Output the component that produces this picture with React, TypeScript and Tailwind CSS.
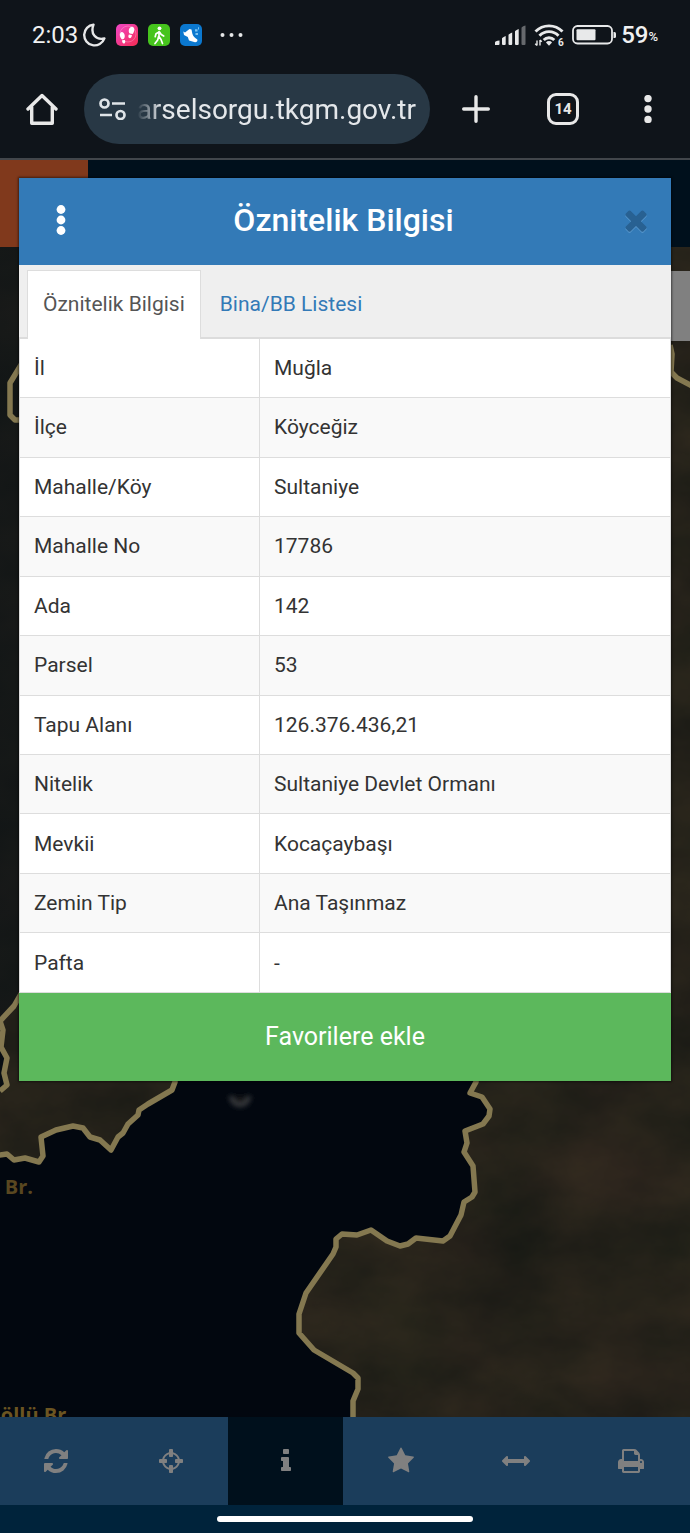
import React from "react";

const ICONS = {
  refresh:
    "M1639 1056q0 5-1 7-64 268-268 434.5t-478 166.5q-146 0-282.5-55t-243.5-157l-129 129q-19 19-45 19t-45-19-19-45v-448q0-26 19-45t45-19h448q26 0 45 19t19 45-19 45l-137 137q71 66 161 102t187 36q134 0 250-65t186-179q11-17 53-117 8-23 30-23h192q13 0 22.5 9.5t9.5 22.5zm25-800v448q0 26-19 45t-45 19h-448q-26 0-45-19t-19-45 19-45l138-138q-148-137-349-137-134 0-250 65t-186 179q-11 17-53 117-8 23-30 23h-199q-13 0-22.5-9.5t-9.5-22.5v-7q65-268 270-434.5t480-166.5q146 0 284 55.5t245 156.5l130-129q19-19 45-19t45 19 19 45z",
  crosshairs:
    "M1325 1024h-109q-26 0-45-19t-19-45v-128q0-26 19-45t45-19h109q-32-108-112.5-188.5t-188.5-112.5v109q0 26-19 45t-45 19h-128q-26 0-45-19t-19-45v-109q-108 32-188.5 112.5t-112.5 188.5h109q26 0 45 19t19 45v128q0 26-19 45t-45 19h-109q32 108 112.5 188.5t188.5 112.5v-109q0-26 19-45t45-19h128q26 0 45 19t19 45v109q108-32 188.5-112.5t112.5-188.5zm339-192v128q0 26-19 45t-45 19h-143q-37 161-154.5 278.5t-278.5 154.5v143q0 26-19 45t-45 19h-128q-26 0-45-19t-19-45v-143q-161-37-278.5-154.5t-154.5-278.5h-143q-26 0-45-19t-19-45v-128q0-26 19-45t45-19h143q37-161 154.5-278.5t278.5-154.5v-143q0-26 19-45t45-19h128q26 0 45 19t19 45v143q161 37 278.5 154.5t154.5 278.5h143q26 0 45 19t19 45z",
  info: "M1216 1344v128q0 26-19 45t-45 19h-512q-26 0-45-19t-19-45v-128q0-26 19-45t45-19h64v-384h-64q-26 0-45-19t-19-45v-128q0-26 19-45t45-19h384q26 0 45 19t19 45v576h64q26 0 45 19t19 45zm-128-1152v192q0 26-19 45t-45 19h-256q-26 0-45-19t-19-45v-192q0-26 19-45t45-19h256q26 0 45 19t19 45z",
  star: "M1728 647q0 22-26 48l-363 354 86 500q1 7 1 20 0 21-10.5 35.5t-30.5 14.5q-19 0-40-12l-449-236-449 236q-22 12-40 12-21 0-31.5-14.5t-10.5-35.5q0-6 2-20l86-500-364-354q-25-27-25-48 0-37 56-46l502-73 225-455q19-41 49-41t49 41l225 455 502 73q56 9 56 46z",
  arrows:
    "M1792 896q0 26-19 45l-256 256q-19 19-45 19t-45-19-19-45v-128h-1024v128q0 26-19 45t-45 19-45-19l-256-256q-19-19-19-45t19-45l256-256q19-19 45-19t45 19 19 45v128h1024v-128q0-26 19-45t45-19 45 19l256 256q19 19 19 45z",
  print:
    "M448 1536h896v-256h-896v256zm0-640h896v-384h-160q-40 0-68-28t-28-68v-160h-640v640zm1152 64q0-26-19-45t-45-19-45 19-19 45 19 45 45 19 45-19 19-45zm128 0v416q0 13-9.5 22.5t-22.5 9.5h-224v160q0 40-28 68t-68 28h-960q-40 0-68-28t-28-68v-160h-224q-13 0-22.5-9.5t-9.5-22.5v-416q0-79 56.5-135.5t135.5-56.5h64v-544q0-40 28-68t68-28h672q40 0 88 20t76 48l152 152q28 28 48 76t20 88v256h64q79 0 135.5 56.5t56.5 135.5z",
  times:
    "M1490 1322q0 40-28 68l-136 136q-28 28-68 28t-68-28l-294-294-294 294q-28 28-68 28t-68-28l-136-136q-28-28-28-68t28-68l294-294-294-294q-28-28-28-68t28-68l136-136q28-28 68-28t68 28l294 294 294-294q28-28 68-28t68 28l136 136q28 28 28 68t-28 68l-294 294 294 294q28 28 28 68z",
};

function Glyph({ name, className }: { name: keyof typeof ICONS; className?: string }) {
  return (
    <svg viewBox="0 0 1792 1792" fill="currentColor" className={className} aria-hidden="true">
      <path d={ICONS[name]} />
    </svg>
  );
}

const ROWS: [string, string][] = [
  ["İl", "Muğla"],
  ["İlçe", "Köyceğiz"],
  ["Mahalle/Köy", "Sultaniye"],
  ["Mahalle No", "17786"],
  ["Ada", "142"],
  ["Parsel", "53"],
  ["Tapu Alanı", "126.376.436,21"],
  ["Nitelik", "Sultaniye Devlet Ormanı"],
  ["Mevkii", "Kocaçaybaşı"],
  ["Zemin Tip", "Ana Taşınmaz"],
  ["Pafta", "-"],
];

const TOOLS: { name: keyof typeof ICONS; label: string; active?: boolean }[] = [
  { name: "refresh", label: "Yenile" },
  { name: "crosshairs", label: "Konum" },
  { name: "info", label: "Bilgi", active: true },
  { name: "star", label: "Favoriler" },
  { name: "arrows", label: "Ölçüm" },
  { name: "print", label: "Yazdır" },
];

function StatusBar() {
  return (
    <div className="flex h-[70px] items-center justify-between px-8 text-[#f0f1f2]">
      <div className="flex items-center">
        <span className="text-[24px] leading-7">2:03</span>
        <svg viewBox="0 0 24 24" className="ml-1 size-6" fill="none" stroke="#e6e7e8" strokeWidth="2.4" strokeLinejoin="round" aria-hidden="true">
          <path d="M11.5 1.6A10.4 10.4 0 1 0 22.4 15.4C14 17.500 8 11 11.500 1.600Z" />
        </svg>
        <svg viewBox="0 0 22 22" className="ml-[10px] size-[22px]" aria-hidden="true">
          <defs>
            <linearGradient id="pink" x1="0" y1="0" x2="1" y2="1">
              <stop offset="0" stopColor="#f047c8" />
              <stop offset="1" stopColor="#f52c52" />
            </linearGradient>
          </defs>
          <rect width="22" height="22" rx="5" fill="url(#pink)" />
          <circle cx="12" cy="10" r="8" fill="none" stroke="#fff" strokeOpacity=".25" />
          <g fill="#fff">
            <path d="M4.300 9C5.600 6.800 8.300 8.500 8.700 11.200C8.900 13 8.500 14.200 7.700 15L5.700 15.200C4 13 3.200 11 4.300 9Z" />
            <path d="M6.100 16.300L8.900 16C9.600 17.500 9.200 19.400 8 19.600C6.700 19.800 6 18 6.100 16.300Z" />
            <path d="M13 5.200C13.600 3.200 15.800 2 17.300 3.200C18.900 4.600 18.400 8 16.600 9.900L13.700 9.500C12.700 8.400 12.500 6.700 13 5.200Z" />
            <path d="M12.900 10.500L15.900 11C15.900 12.900 14.800 14.500 13.300 14.100C12 13.800 12.200 11.800 12.900 10.500Z" />
          </g>
        </svg>
        <svg viewBox="0 0 22 22" className="ml-[10px] size-[22px]" aria-hidden="true">
          <rect width="22" height="22" rx="5" fill="#46c41d" />
          <circle cx="11.500" cy="4.300" r="1.900" fill="#fff" />
          <path d="M11 7.500V12.500L13 15.500L14.500 19.500M10.600 12.500L9.700 16L7 19.500M11 8L8 9.700L7.200 12.700M11.500 8L13.200 10.500L15.700 12" fill="none" stroke="#fff" strokeWidth="1.700" strokeLinecap="round" strokeLinejoin="round" />
        </svg>
        <svg viewBox="0 0 22 22" className="ml-[10px] size-[22px]" aria-hidden="true">
          <rect width="22" height="22" rx="5" fill="#0b78cf" />
          <path d="M3.300 7.500L5 8.600L9.500 5L11.500 5.600L12.300 9.500C13 12.500 15 14 17.300 15.500C18 17 16.500 18.300 15 18.200L9 16.500L7.800 13L4 11Z" fill="#fff" />
          <path d="M15 6.300h2.500M15.500 10h2.500M18 4.300h1" stroke="#7cc3f2" strokeWidth="2.200" />
        </svg>
        <svg viewBox="0 0 24 4" className="ml-[18px] h-1 w-6" fill="#e6e7e8" aria-hidden="true">
          <circle cx="2.500" cy="2" r="2" />
          <circle cx="11.500" cy="2" r="2" />
          <circle cx="20.500" cy="2" r="2" />
        </svg>
      </div>
      <div className="flex items-center">
        <svg viewBox="0 0 31 20" className="h-5 w-[31px]" fill="#e8e9ea" aria-hidden="true">
          <path d="M0 20v-2.500q0-1.500 4.500-2v3.500q0 1-1 1zM7 13.500q0-1 3.700-2.500v8q0 1-1 1h-1.700q-1 0-1-1zM13.500 10q0-1 3.700-2.500v11.500q0 1-1 1h-1.700q-1 0-1-1zM20 6.500q0-1 3.700-2.500v15q0 1-1 1h-1.700q-1 0-1-1z" />
          <path d="M26.500 3q0-1.500 4-2.500v18.500q0 1-1 1h-2q-1 0-1-1z" opacity=".4" />
        </svg>
        <svg viewBox="0 0 30 24" className="ml-2 h-6 w-[30px]" aria-hidden="true">
          <g fill="none" stroke="#e8e9ea" strokeWidth="2.900">
            <path d="M1.500 8.500A19 19 0 0 1 28.500 8.500" />
            <path d="M5.500 12.800A13 13 0 0 1 24.500 12.800" />
            <path d="M9.700 17A7.500 7.500 0 0 1 20.300 17" />
          </g>
          <path d="M12 19.500a3.500 3 0 0 1 6 0l-3 3.300z" fill="#e8e9ea" />
          <path d="M3 22.500v-5M3 22.500l-1.800-1.800M6 17v5.500M6 17l1.800 1.800" stroke="#e8e9ea" strokeWidth="1.400" fill="none" />
          <text x="24" y="23" fontSize="10" fontWeight="700" fill="#e8e9ea" fontFamily="Roboto, sans-serif">6</text>
        </svg>
        <svg viewBox="0 0 44 20" className="ml-2 h-5 w-11" aria-hidden="true">
          <rect x="1" y="1" width="39" height="17.500" rx="4.500" fill="none" stroke="#e8e9ea" strokeWidth="1.800" />
          <rect x="4.500" y="4.300" width="19" height="11" rx="1" fill="#e8e9ea" />
          <path d="M41.500 7h1q1.500 0 1.500 1.500v3q0 1.500-1.500 1.500h-1z" fill="#e8e9ea" />
        </svg>
        <span className="ml-[5px] text-[24px] font-medium leading-7">59</span>
        <span className="self-end text-[13px] font-medium leading-6">%</span>
      </div>
    </div>
  );
}

function BrowserBar() {
  return (
    <div className="flex h-[90px] items-start border-b-2 border-[#42464b] pt-1">
      <div className="flex w-full items-center pl-[26px] pr-[38px]">
        <button aria-label="Ana sayfa" className="flex size-8 shrink-0 items-center justify-center">
          <svg viewBox="0 0 32 32" className="size-8" fill="none" stroke="#e8e8e8" strokeWidth="3.400" strokeLinejoin="round" strokeLinecap="round" aria-hidden="true">
            <path d="M2 16L16 2.500L30 16M5.700 14V30.200H26.300V14" />
          </svg>
        </button>
        <div className="ml-[26px] flex h-[70px] min-w-0 flex-1 items-center overflow-hidden rounded-full bg-[#283845] pl-[15px] pr-[14px]">
          <svg viewBox="0 0 27 22" className="h-[22px] w-[27px] shrink-0" fill="none" stroke="#dfe4e8" strokeWidth="2.700" aria-hidden="true">
            <circle cx="5.500" cy="5.500" r="4" />
            <path d="M13 5.500H26M1 17H13" />
            <circle cx="21.500" cy="17" r="4" />
          </svg>
          <div className="ml-2 flex min-w-0 flex-1 justify-end whitespace-nowrap pt-[2px] text-[28px] leading-9 text-[#e4e7ea]">
            <span className="[mask-image:linear-gradient(to_right,transparent,black_24px)]">arselsorgu.tkgm.gov.tr</span>
          </div>
        </div>
        <button aria-label="Yeni sekme" className="ml-8 shrink-0">
          <svg viewBox="0 0 28 28" className="size-7" stroke="#e8e8e8" strokeWidth="3.400" strokeLinecap="round" aria-hidden="true">
            <path d="M14 1.700V26.300M1.700 14H26.300" />
          </svg>
        </button>
        <button aria-label="Sekmeler" className="ml-[57px] flex size-8 shrink-0 items-center justify-center rounded-[9px] border-[3px] border-[#e8e8e8] text-[15px] font-bold leading-none text-[#e8e8e8]">
          14
        </button>
        <button aria-label="Menü" className="ml-[65px] shrink-0">
          <svg viewBox="0 0 8 28" className="h-7 w-2" fill="#e8e8e8" aria-hidden="true">
            <circle cx="4" cy="3.600" r="3.700" />
            <circle cx="4" cy="14" r="3.700" />
            <circle cx="4" cy="24.400" r="3.700" />
          </svg>
        </button>
      </div>
    </div>
  );
}

const LAKE =
  "M175 1000L175 1082L172 1090L148 1104L139 1110L138 1115L128 1124L123 1133L118 1137L111 1150L100 1140L90 1137L83 1128L73 1126L56 1130L41 1137L43 1156L39 1162L25 1158L14 1160L7 1154L-6 1156V1440H353V1401L358 1389V1378L353 1373L314 1350L299 1333V1314L306 1293L333 1254L336 1247V1239L342 1234L357 1235L371 1230L387 1241L400 1246L408 1244L416 1238L443 1241L450 1236L461 1215L464 1202L472 1197L475 1192L473 1166L464 1152L467 1143L465 1131L483 1124L489 1116L490 1109L482 1097L470 1093L476 1082V1000Z";

function SatelliteMap() {
  return (
    <svg viewBox="0 160 690 1257" preserveAspectRatio="xMidYMid slice" className="absolute inset-0 size-full" aria-hidden="true">
      <defs>
        <filter id="terrain" x="0" y="0" width="100%" height="100%" colorInterpolationFilters="sRGB">
          <feTurbulence type="fractalNoise" baseFrequency="0.009 0.014" numOctaves="5" seed="8" />
          <feColorMatrix values="0.12 0 0 0 0.085  0.08 0.02 0 0 0.082  0.05 0 0 0 0.075  0 0 0 0 1" />
        </filter>
        <filter id="soft" x="-100%" y="-100%" width="300%" height="300%">
          <feGaussianBlur stdDeviation="2.500" />
        </filter>
        <linearGradient id="dusk" x1="0" y1="0" x2="1" y2="0">
          <stop offset="0" stopColor="#0c1216" stopOpacity=".65" />
          <stop offset="1" stopColor="#0c1216" stopOpacity="0" />
        </linearGradient>
      </defs>
      <rect y="160" width="690" height="1257" filter="url(#terrain)" />
      <path d="M0 160H345V992H22L14 1006L0 1021Z" fill="url(#dusk)" />
      <path d={LAKE} fill="#02070f" stroke="#847850" strokeWidth="5.500" strokeLinejoin="round" />
      <path d="M-6 1021L3 1030L1 1047L7 1058L4 1073L7 1085L-6 1091Z" fill="#080d12" />
      <g fill="none" stroke="#847850" strokeWidth="5.500" strokeLinejoin="round">
        <path d="M22 992L14 1006L0 1021L3 1030L1 1047L7 1058L4 1073L7 1085L0 1091" />
        <path d="M24 360L10 383V415L15 420H24" />
        <path d="M670 345L672 354L671 372L677 378L694 387" />
      </g>
      <path d="M231 1096A9 9 0 0 0 249 1096" fill="#141416" stroke="#3a3c40" strokeWidth="4" filter="url(#soft)" />
      <g fontFamily="Open Sans, sans-serif" fontWeight="700" fontSize="20">
        <text x="33" y="1194" textAnchor="end" fill="#594720">r Br.</text>
        <text x="72" y="1422" textAnchor="end" fill="#6b5522">Göllü Br.</text>
      </g>
    </svg>
  );
}

function AttributeDialog() {
  return (
    <section role="dialog" aria-label="Öznitelik Bilgisi" className="relative mx-[19px] mt-[18px] shadow-[0_0_2px_1px_rgba(0,0,0,0.5)]">
      <header className="flex h-[87px] items-center justify-between bg-[#337ab7] pb-1 pl-9 pr-[19px] text-white">
        <button aria-label="Seçenekler" className="flex w-3 justify-center">
          <svg viewBox="0 0 10 30" className="h-[30px] w-[10px]" fill="currentColor" aria-hidden="true">
            <circle cx="5" cy="4.500" r="4.400" />
            <circle cx="5" cy="15" r="4.400" />
            <circle cx="5" cy="25.500" r="4.400" />
          </svg>
        </button>
        <h1 className="text-[32px] font-medium leading-10">Öznitelik Bilgisi</h1>
        <button aria-label="Kapat" className="text-[#286192] drop-shadow-[0_1px_0_#5c9bd0]">
          <Glyph name="times" className="size-8" />
        </button>
      </header>
      <nav className="flex h-[74px] items-end border-b-2 border-[#dcdcdc] bg-[#efefef] pl-2">
        <a href="#oznitelik" className="-mb-[2px] flex h-[69px] items-center border border-b-0 border-[#dddddd] bg-white px-[15px] pb-[2px] text-[21px] leading-8 text-[#555555]">
          Öznitelik Bilgisi
        </a>
        <a href="#bina" className="flex h-[67px] items-center px-[19px] text-[21px] leading-8 text-[#337ab7]">
          Bina/BB Listesi
        </a>
      </nav>
      <table className="h-[654px] w-full border-collapse bg-white text-left text-[21px] leading-8 text-[#333333]">
        <tbody>
          {ROWS.map(([label, value]) => (
            <tr key={label} className="border-b border-[#dddddd] even:bg-[#f9f9f9]">
              <th scope="row" className="w-[240px] border-x border-[#dddddd] px-[14px] font-normal">
                {label}
              </th>
              <td className="border-r border-[#dddddd] px-[14px]">{value}</td>
            </tr>
          ))}
        </tbody>
      </table>
      <button className="h-[88px] w-full bg-[#5cb85c] text-[25px] leading-8 text-white">Favorilere ekle</button>
    </section>
  );
}

export default function App() {
  return (
    <div className="flex min-h-screen flex-col bg-[#0f141a] font-[Roboto,sans-serif]">
      <StatusBar />
      <BrowserBar />
      <main className="relative flex-1 overflow-hidden bg-[#24211a] pb-16">
        <SatelliteMap />
        <div className="absolute inset-x-0 top-0 flex h-[87px] bg-[#00101c]">
          <div className="w-[88px] bg-[#80391c]" />
        </div>
        <div className="absolute right-0 top-[111px] h-[70px] w-10 bg-[#808080]" />
        <AttributeDialog />
      </main>
      <footer className="relative overflow-hidden bg-[#00233b]">
        <div className="bg-[#1b3d5b]">
          <div className="-ml-[2px] mr-[2px] grid grid-cols-6">
            {TOOLS.map((tool) => (
              <button
                key={tool.name}
                aria-label={tool.label}
                className={
                  tool.active
                    ? "flex h-[88px] items-center justify-center bg-[#00101c] text-[#808080]"
                    : "flex h-[88px] items-center justify-center text-[#808080]"
                }
              >
                <Glyph name={tool.name} className="size-7" />
              </button>
            ))}
          </div>
        </div>
        <div className="flex h-7 items-center justify-center">
          <div className="h-[6px] w-[37%] rounded-full bg-white" />
        </div>
      </footer>
    </div>
  );
}
